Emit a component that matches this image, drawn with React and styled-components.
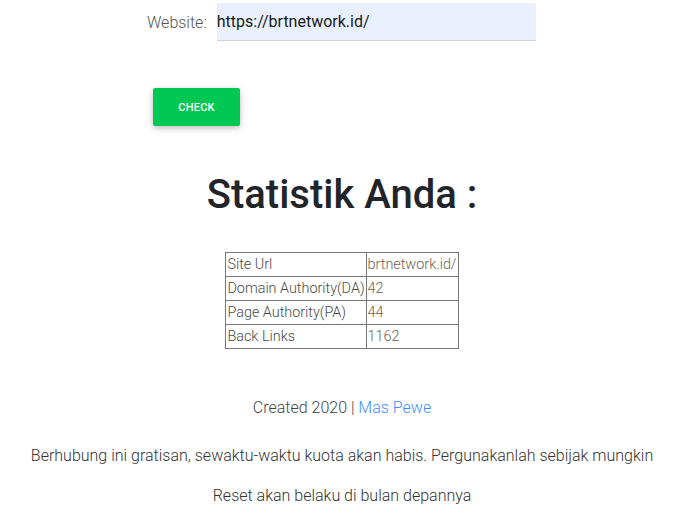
import React from "react";
import styled, { createGlobalStyle } from "styled-components";

const GlobalStyle = createGlobalStyle`
  html, body {
    margin: 0;
    padding: 0;
    background: #ffffff;
    font-family: Roboto, "Liberation Sans", sans-serif;
  }
`;

const Page = styled.div`
  width: 684px;
  display: flex;
  flex-direction: column;
  align-items: center;
`;

const FormRow = styled.div`
  align-self: flex-start;
  display: flex;
  align-items: center;
  margin-top: 3px;
  padding-left: 147px;
`;

const Label = styled.label`
  font-size: 16px;
  font-weight: 300;
  color: #555;
  margin-right: 10px;
`;

const Input = styled.input`
  width: 319px;
  height: 37px;
  box-sizing: content-box;
  border: none;
  border-bottom: 1px solid #ced4da;
  background: #e8f0fe;
  padding: 0;
  font-family: Roboto, "Liberation Sans", sans-serif;
  font-size: 16px;
  font-weight: 400;
  color: #1a1a1a;
  outline: none;
`;

const ButtonRow = styled.div`
  align-self: flex-start;
  padding-left: 153px;
  margin-top: 47px;
`;

const Button = styled.button`
  width: 87px;
  height: 38px;
  border: none;
  border-radius: 2px;
  background: #00c853;
  color: #fff;
  font-family: Roboto, "Liberation Sans", sans-serif;
  font-size: 11px;
  font-weight: 500;
  letter-spacing: 0.2px;
  box-shadow: 0 2px 5px rgba(0, 0, 0, 0.16), 0 2px 10px rgba(0, 0, 0, 0.12);
`;

const Heading = styled.h1`
  margin: 45px 0 0;
  font-size: 40px;
  font-weight: 500;
  line-height: 48px;
  color: #212529;
`;

const Table = styled.table`
  margin-top: 33px;
  border-collapse: collapse;
  border: 1px solid #333;
  font-size: 14.4px;
  font-weight: 300;
`;

const Cell = styled.td`
  border: 1px solid #777;
  height: 23px;
  padding: 0 1px;
  color: ${(p) => (p.$value ? "#6e5f52" : "#4a4a4a")};
  white-space: nowrap;
`;

const Credit = styled.p`
  margin: 49px 0 0;
  font-size: 16px;
  font-weight: 300;
  color: #444;
  line-height: 20px;

  a {
    color: #3f8cff;
    text-decoration: none;
  }
`;

const Note = styled.p`
  margin: ${(p) => p.$gap}px 0 0;
  font-size: 16px;
  font-weight: 300;
  color: #333;
  line-height: 20px;
`;

const rows = [
  ["Site Url", "brtnetwork.id/"],
  ["Domain Authority(DA)", "42"],
  ["Page Authority(PA)", "44"],
  ["Back Links", "1162"],
];

export default function App() {
  return (
    <>
      <GlobalStyle />
      <Page>
        <FormRow>
          <Label htmlFor="site">Website:</Label>
          <Input id="site" defaultValue="https://brtnetwork.id/" />
        </FormRow>
        <ButtonRow>
          <Button>CHECK</Button>
        </ButtonRow>
        <Heading>Statistik Anda :</Heading>
        <Table>
          <tbody>
            {rows.map(([k, v]) => (
              <tr key={k}>
                <Cell>{k}</Cell>
                <Cell $value>{v}</Cell>
              </tr>
            ))}
          </tbody>
        </Table>
        <Credit>
          Created 2020 | <a href="#">Mas Pewe</a>
        </Credit>
        <Note $gap={28}>
          Berhubung ini gratisan, sewaktu-waktu kuota akan habis. Pergunakanlah sebijak mungkin
        </Note>
        <Note $gap={20}>Reset akan belaku di bulan depannya</Note>
      </Page>
    </>
  );
}
